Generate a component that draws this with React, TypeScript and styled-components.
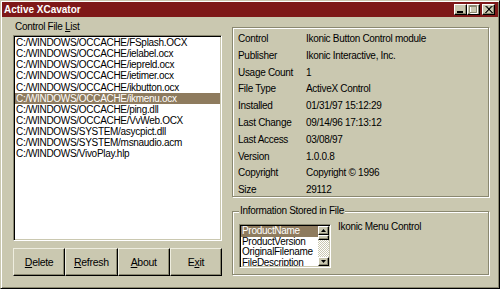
import React from "react";
import styled, { createGlobalStyle } from "styled-components";

const FACE = "#cac8b0";
const SHADOW = "#8a8870";
const HILITE = "#ffffff";
const SELECT = "#8e7b5e";
const CAPTION = "#7e1818";

const files = [
    "C:/WINDOWS/OCCACHE/FSplash.OCX",
    "C:/WINDOWS/OCCACHE/ielabel.ocx",
    "C:/WINDOWS/OCCACHE/iepreld.ocx",
    "C:/WINDOWS/OCCACHE/ietimer.ocx",
    "C:/WINDOWS/OCCACHE/ikbutton.ocx",
    "C:/WINDOWS/OCCACHE/ikmenu.ocx",
    "C:/WINDOWS/OCCACHE/ping.dll",
    "C:/WINDOWS/OCCACHE/VvWeb.OCX",
    "C:/WINDOWS/SYSTEM/asycpict.dll",
    "C:/WINDOWS/SYSTEM/msnaudio.acm",
    "C:/WINDOWS/VivoPlay.hlp",
];

const details: [string, string][] = [
    ["Control", "Ikonic Button Control module"],
    ["Publisher", "Ikonic Interactive, Inc."],
    ["Usage Count", "1"],
    ["File Type", "ActiveX Control"],
    ["Installed", "01/31/97 15:12:29"],
    ["Last Change", "09/14/96 17:13:12"],
    ["Last Access", "03/08/97"],
    ["Version", "1.0.0.8"],
    ["Copyright", "Copyright \u00a9 1996"],
    ["Size", "29112"],
];

const infoKeys = ["ProductName", "ProductVersion", "OriginalFilename", "FileDescription"];

const App: React.FC = () => {
    return (
        <>
            <GlobalStyle />
            <Window>
                <TitleBar>
                    <Caption>Active XCavator</Caption>
                    <CapButton>
                        <svg width="7" height="7" viewBox="0 0 7 7">
                            <rect x="0" y="5" width="6" height="2" fill="#000" />
                        </svg>
                    </CapButton>
                    <CapButton>
                        <svg width="9" height="9" viewBox="0 0 9 9">
                            <path d="M1.5 1.5h7v7h-7z" fill="none" stroke={HILITE} />
                            <path d="M0.5 0.5h7v7h-7z M0.5 1.5h7" fill="none" stroke={SHADOW} />
                        </svg>
                    </CapButton>
                    <CloseButton>
                        <svg width="8" height="7" viewBox="0 0 8 7">
                            <path d="M0.5 0l7 7M7.5 0l-7 7M1.5 0l6 7M6.5 0l-6 7" stroke="#000" strokeWidth="1" />
                        </svg>
                    </CloseButton>
                </TitleBar>
                <Body>
                    <LeftColumn>
                        <FieldLabel>
                            Control File <u>L</u>ist
                        </FieldLabel>
                        <ListBox>
                            {files.map((f, i) => (
                                <ListItem key={f} selected={i === 5}>
                                    {f}
                                </ListItem>
                            ))}
                        </ListBox>
                        <ButtonRow>
                            <PushButton>
                                <u>D</u>elete
                            </PushButton>
                            <PushButton>
                                <u>R</u>efresh
                            </PushButton>
                            <PushButton>
                                <u>A</u>bout
                            </PushButton>
                            <PushButton>
                                E<u>x</u>it
                            </PushButton>
                        </ButtonRow>
                    </LeftColumn>
                    <RightColumn>
                        <DetailsGroup>
                            {details.map(([k, v]) => (
                                <React.Fragment key={k}>
                                    <DetailCell>{k}</DetailCell>
                                    <DetailCell>{v}</DetailCell>
                                </React.Fragment>
                            ))}
                        </DetailsGroup>
                        <InfoGroup>
                            <Legend>Information Stored in File</Legend>
                            <InfoRow>
                                <SmallList>
                                    <SmallItems>
                                        {infoKeys.map((k, i) => (
                                            <SmallItem key={k} selected={i === 0}>
                                                {k}
                                            </SmallItem>
                                        ))}
                                    </SmallItems>
                                    <ScrollBar>
                                        <ScrollButton>
                                            <svg width="5" height="3" viewBox="0 0 5 3">
                                                <path d="M2.5 0L5 3H0z" fill="#000" />
                                            </svg>
                                        </ScrollButton>
                                        <Thumb />
                                        <Track />
                                        <ScrollButton>
                                            <svg width="5" height="3" viewBox="0 0 5 3">
                                                <path d="M0 0h5L2.5 3z" fill="#000" />
                                            </svg>
                                        </ScrollButton>
                                    </ScrollBar>
                                </SmallList>
                                <InfoValue>Ikonic Menu Control</InfoValue>
                            </InfoRow>
                        </InfoGroup>
                    </RightColumn>
                </Body>
            </Window>
        </>
    );
};

const GlobalStyle = createGlobalStyle`
    html, body {
        margin: 0;
        padding: 0;
        background: ${FACE};
    }
    body {
        font-family: "Liberation Sans", Arial, sans-serif;
        font-size: 10px;
        letter-spacing: -0.3px;
        color: #000;
    }
    u {
        text-decoration-thickness: 1px;
        text-underline-offset: 1px;
    }
`;

const Window = styled.div`
    box-sizing: border-box;
    width: 500px;
    height: 289px;
    padding: 1px;
    background: ${FACE};
    border: 1px solid;
    border-color: ${FACE} #000 #000 ${FACE};
    box-shadow: inset 1px 1px ${HILITE}, inset -1px -1px ${SHADOW};
    display: flex;
    flex-direction: column;
`;

const TitleBar = styled.div`
    height: 15px;
    flex: none;
    background: ${CAPTION};
    display: flex;
    align-items: center;
    padding: 0 3px 0 2px;
`;

const Caption = styled.div`
    flex: 1;
    color: #fff;
    font-weight: bold;
    font-size: 10px;
    letter-spacing: 0;
    line-height: 15px;
`;

const CapButton = styled.div`
    box-sizing: border-box;
    width: 13px;
    height: 11px;
    background: ${FACE};
    border: 1px solid;
    border-color: ${HILITE} #000 #000 ${HILITE};
    box-shadow: inset -1px -1px ${SHADOW};
    display: flex;
    align-items: center;
    justify-content: center;
`;

const CloseButton = styled(CapButton)`
    margin-left: 2px;
`;

const Body = styled.div`
    flex: 1;
    display: flex;
    gap: 10px;
    padding: 0 9px 0 11px;
`;

const LeftColumn = styled.div`
    width: 209px;
    display: flex;
    flex-direction: column;
`;

const FieldLabel = styled.div`
    padding: 2px 0 0 2px;
    line-height: 16px;
`;

const sunken = `
    box-sizing: border-box;
    border: 1px solid;
    border-color: ${SHADOW} ${HILITE} ${HILITE} ${SHADOW};
    box-shadow: inset 1px 1px #000, inset -1px -1px ${FACE};
    background: #fff;
    overflow: hidden;
`;

const ListBox = styled.div`
    ${sunken}
    height: 206px;
    padding: 1px 1px 0 1px;
`;

const ListItem = styled.div<{ selected?: boolean }>`
    height: 11.15px;
    line-height: 11.15px;
    padding-left: 1px;
    white-space: nowrap;
    background: ${p => (p.selected ? SELECT : "transparent")};
    color: ${p => (p.selected ? "#fff" : "#000")};
`;

const ButtonRow = styled.div`
    margin-top: 7px;
    display: grid;
    grid-template-columns: repeat(4, 1fr);
`;

const PushButton = styled.div`
    box-sizing: border-box;
    height: 28px;
    border: 1px solid;
    border-color: #eeeddf #000 #000 #eeeddf;
    box-shadow: inset -1px -1px ${SHADOW};
    display: flex;
    align-items: center;
    justify-content: center;
    font-size: 10.5px;
`;

const RightColumn = styled.div`
    width: 257px;
    padding-top: 10px;
    display: flex;
    flex-direction: column;
`;

const etched = `
    box-sizing: border-box;
    border: 1px solid ${SHADOW};
    box-shadow: inset 1px 1px ${HILITE}, 1px 1px ${HILITE};
`;

const DetailsGroup = styled.div`
    ${etched}
    height: 170px;
    padding: 3px 5px 0 5px;
    display: grid;
    grid-template-columns: 68px 1fr;
    grid-auto-rows: 16.8px;
    align-items: center;
`;

const DetailCell = styled.div`
    line-height: 16.8px;
    white-space: nowrap;
`;

const InfoGroup = styled.div`
    ${etched}
    margin-top: 14px;
    height: 64px;
    padding: 0 5px 0 6px;
    display: flex;
    flex-direction: column;
`;

const Legend = styled.div`
    align-self: flex-start;
    margin-top: -7px;
    padding: 0 1px;
    line-height: 12px;
    background: ${FACE};
`;

const InfoRow = styled.div`
    margin-top: 7px;
    display: flex;
    gap: 7px;
`;

const SmallList = styled.div`
    ${sunken}
    width: 92px;
    height: 44px;
    padding: 1px;
    display: flex;
`;

const SmallItems = styled.div`
    flex: 1;
    overflow: hidden;
`;

const SmallItem = styled.div<{ selected?: boolean }>`
    height: 10.5px;
    line-height: 10.5px;
    padding-left: 1px;
    white-space: nowrap;
    background: ${p => (p.selected ? SELECT : "transparent")};
    color: ${p => (p.selected ? "#fff" : "#000")};
`;

const ScrollBar = styled.div`
    width: 11px;
    display: flex;
    flex-direction: column;
`;

const ScrollButton = styled.div`
    box-sizing: border-box;
    height: 9px;
    background: ${FACE};
    border: 1px solid;
    border-color: ${HILITE} #000 #000 ${HILITE};
    box-shadow: inset -1px -1px ${SHADOW};
    display: flex;
    align-items: center;
    justify-content: center;
`;

const Thumb = styled(ScrollButton)`
    height: 5px;
`;

const Track = styled.div`
    flex: 1;
    background: repeating-conic-gradient(${HILITE} 0 25%, ${FACE} 0 50%) 0 0 / 2px 2px;
`;

const InfoValue = styled.div`
    margin-top: -3px;
    line-height: 12px;
    white-space: nowrap;
`;

export default App;
